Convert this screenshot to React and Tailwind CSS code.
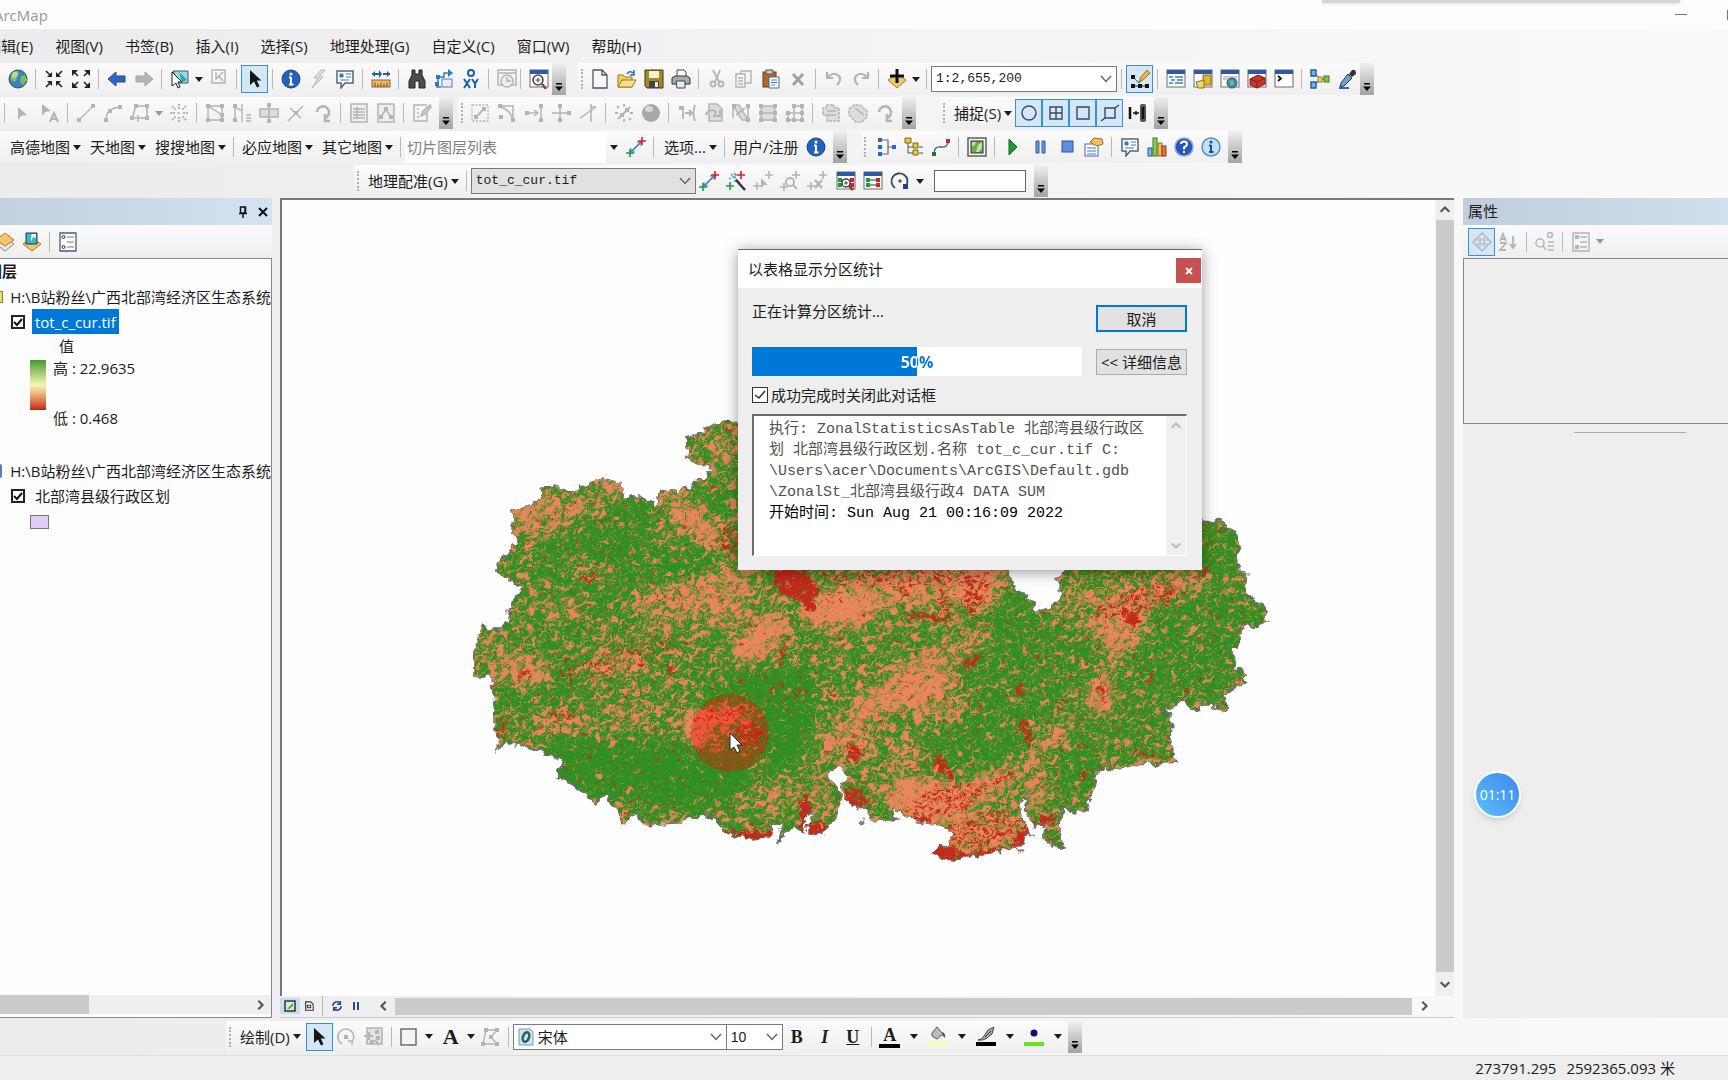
import { useState } from "react";

const G = "#b4b4b4";

const win = (
  <>
    <rect x="1" y="1" width="18" height="17" fill="#fff" stroke="#6b6b6b" />
    <rect x="1" y="1" width="18" height="4" fill="#2d5aa0" />
  </>
);

const cross = (x, y, c) => (
  <path d={`M${x - 4} ${y}H${x + 4}M${x} ${y - 4}V${y + 4}`} stroke={c} strokeWidth="1.6" />
);

const nodes = (pts, c = G) =>
  pts.map(([x, y]) => (
    <rect key={`${x}-${y}`} x={x - 2} y={y - 2} width="4" height="4" fill={c} stroke="none" />
  ));

const pointer = (c) => <path d="M5 1V16L9 12.500L12 18.500L14.500 17.300L11.800 11.500H16.500Z" fill={c} />;

const ICONS = {
  globe: (
    <>
      <circle cx="10" cy="10" r="9" fill="#3c7fc4" stroke="#27507f" />
      <path d="M7 2C3 4 2 8 3 11L7 13L9 10L7 7L11 5L10 2ZM13 7L17 6L19 11L15 16L12 13Z" fill="#7fc04a" />
      <circle cx="7" cy="6" r="3" fill="#fff" opacity=".45" />
    </>
  ),
  zoomIn: (
    <g stroke="#222" strokeWidth="1.600" fill="#222">
      <path d="M2 2L6 6M18 2L14 6M2 18L6 14M18 18L14 14" />
      <path d="M8 3V8H3ZM12 3V8H17ZM8 17V12H3ZM12 17V12H17Z" stroke="none" />
    </g>
  ),
  zoomOut: (
    <g stroke="#222" strokeWidth="1.600" fill="#222">
      <path d="M3 3L7 7M17 3L13 7M3 17L7 13M17 17L13 13" />
      <path d="M1 1H7L1 7ZM19 1H13L19 7ZM1 19H7L1 13ZM19 19H13L19 13Z" stroke="none" />
    </g>
  ),
  back: <path d="M1 10L9 3V7H18V13H9V17Z" fill="#2f66c5" stroke="#1f4a96" />,
  forward: <path d="M19 10L11 3V7H2V13H11V17Z" fill={G} stroke="#a5a5a5" />,
  selectFeatures: (
    <>
      <path d="M3 2H18V14H8Z" fill="#8fdde0" stroke="#555" />
      <path d="M9 3L17 11L12 13Z" fill="#26a7a7" />
      <path d="M2 3V17L6 14L8 19L10 18L8 13H12Z" fill="#fff" stroke="#222" />
    </>
  ),
  clearSel: <path d="M3 1H16V14H3ZM7 3V10L10 7L14 12M10 7L14 3" fill="none" stroke={G} strokeWidth="1.400" />,
  pointer: pointer("#161616"),
  info: (
    <>
      <circle cx="10" cy="10" r="9" fill="#2560bd" stroke="#17458e" />
      <path d="M10 8V16M8 8.500H10M8 15.500H12.500" stroke="#fff" strokeWidth="2" />
      <circle cx="10" cy="5" r="1.500" fill="#fff" />
    </>
  ),
  bolt: <path d="M13 1L6 9H10L4 19L15 8H11L17 1Z" fill="#ddd" stroke={G} />,
  popup: (
    <>
      <path d="M2 2H18V14H10L6 19V14H2Z" fill="#fff" stroke="#5a6470" strokeWidth="1.500" />
      <path d="M5 5H8V8H5ZM11 5H16M11 8H16M5 11H14" fill="#2c7cc0" stroke="#2c7cc0" />
    </>
  ),
  measure: (
    <>
      <path d="M1 5H8M12 5H19" stroke="#1c5fa6" strokeWidth="2" />
      <path d="M8 1V9L11 5ZM1 5L4 2V8ZM19 5L16 2V8Z" fill="#1c5fa6" />
      <rect x="1" y="11" width="18" height="7" fill="#e9b765" stroke="#8a6a2c" />
      <path d="M4 14V18M7 15V18M10 14V18M13 15V18M16 14V18" stroke="#6a4d18" />
    </>
  ),
  binoculars: (
    <path d="M5 1H8V5H12V1H15V6L18 12V19H12V12H8V19H2V12L5 6Z" fill="#4b4b4b" stroke="#222" />
  ),
  route: (
    <>
      <path d="M4 16V8H10V4H15M3 15V18H7" fill="none" stroke="#2c7cc0" strokeWidth="1.500" />
      <path d="M2 6H6V10H2ZM1 13H5V17H1Z" fill="#2c7cc0" />
      <path d="M14 0L19 4L14 8Z" fill="#2c7cc0" />
      <rect x="8" y="10" width="10" height="8" fill="#e6eef6" stroke="#5a7fa5" />
    </>
  ),
  xy: (
    <>
      <circle cx="10" cy="4" r="3" fill="#fff" stroke="#1c5fa6" strokeWidth="2" />
      <path d="M3 10L9 19M9 10L3 19M11 10L14 14.500L17 10M14 14V19" stroke="#1c5fa6" strokeWidth="2" fill="none" />
    </>
  ),
  time: (
    <g fill="none" stroke={G} strokeWidth="1.500">
      <path d="M1 1H19V16H1ZM1 4H19" />
      <circle cx="10" cy="12" r="6" fill="#eee" />
      <path d="M10 8V12H14" />
    </g>
  ),
  viewer: (
    <>
      {win}
      <circle cx="9" cy="11" r="5" fill="#fff" stroke="#444" strokeWidth="1.500" />
      <path d="M6.500 11H11.500M9 8.500V13.500" stroke="#444" />
      <path d="M13 15L17 20" stroke="#9b3b2c" strokeWidth="2.500" />
    </>
  ),
  newDoc: <path d="M3 1H12L17 6V19H3ZM12 1V6H17" fill="#f4f8fd" stroke="#555" strokeWidth="1.300" />,
  open: (
    <>
      <path d="M1 18V6H6L8 8H15V18Z" fill="#f2cf5c" stroke="#9c7a1e" />
      <path d="M1 18L5 11H19L15 18Z" fill="#fbe28a" stroke="#9c7a1e" />
      <path d="M10 5Q13 1 16 4M17 1V6H13" stroke="#2b67b5" fill="none" strokeWidth="1.500" />
    </>
  ),
  save: (
    <>
      <path d="M1 1H19V19H3L1 17Z" fill="#a38b2a" stroke="#3d3413" />
      <rect x="5" y="2" width="10" height="7" fill="#f5f1d8" />
      <rect x="5" y="12" width="10" height="7" fill="#444" />
      <rect x="11" y="13" width="3" height="5" fill="#eee" />
    </>
  ),
  print: (
    <>
      <path d="M6 1H13L15 3V8H6Z" fill="#fff" stroke="#444" />
      <path d="M1 9L4 7H16L19 9V15H1Z" fill="#a5abb4" stroke="#333" />
      <path d="M5 12H14V19H6Z" fill="#dcebf9" stroke="#444" />
      <rect x="14" y="10" width="3" height="2" fill="#9ccc3b" />
    </>
  ),
  cut: (
    <g fill="none" stroke={G} strokeWidth="1.800">
      <path d="M6 1L12 13M13 1L8 13" />
      <circle cx="6" cy="15" r="2.500" />
      <circle cx="14" cy="15" r="2.500" />
    </g>
  ),
  copy: <path d="M2 5H11V18H2ZM7 5V2H17V14H11M4 9H9M4 12H9M4 15H9" fill="none" stroke={G} strokeWidth="1.400" />,
  paste: (
    <>
      <rect x="2" y="3" width="13" height="15" fill="#b5652b" stroke="#6f3a14" />
      <rect x="5" y="1" width="7" height="4" fill="#c9c9c9" stroke="#555" />
      <path d="M8 8H18V19H8Z" fill="#fff" stroke="#44689c" />
      <path d="M10 11H16M10 13.500H16M10 16H14" stroke="#3a7ccc" />
    </>
  ),
  del: <path d="M5 5L15 16M15 5L5 16" stroke="#a0a0a0" strokeWidth="2.800" />,
  undo: <path d="M3 3V9H9M4 8Q10 2 15 7Q18 11 13 16" fill="none" stroke={G} strokeWidth="2.200" />,
  redo: <path d="M17 3V9H11M16 8Q10 2 5 7Q2 11 7 16" fill="none" stroke={G} strokeWidth="2.200" />,
  addData: (
    <>
      <path d="M1 11L10 5L19 11L10 19Z" fill="#f3c56c" stroke="#a77b2a" />
      <path d="M10 0V14M3 7H17" stroke="#111" strokeWidth="3" />
    </>
  ),
  editor: (
    <>
      <path d="M3 8L9 14L17 2" fill="none" stroke="#555" />
      <path d="M9 13L11 8L17 1L20 4L13 11Z" fill="#f0b43f" stroke="#9b6d1c" />
      <path d="M3 17H17" stroke="#222" />
      {nodes([[3, 8], [3, 17], [10, 17], [17, 17]], "#111")}
    </>
  ),
  tableWin: (
    <>
      {win}
      <path d="M3 8H7M9 8H17M5 11H9M11 11H17M3 14H7M9 14H17" stroke="#3a7ccc" strokeWidth="1.600" />
    </>
  ),
  catalog: (
    <>
      {win}
      <path d="M10 6H18V16H10Z" fill="#d9b92e" stroke="#87701a" />
      <path d="M3 13L11 11V19H5Z" fill="#f0d764" stroke="#87701a" />
    </>
  ),
  searchWin: (
    <>
      {win}
      <rect x="3" y="7" width="14" height="4" fill="#ccc" />
      <circle cx="12" cy="14" r="5" fill="#3b86c6" stroke="#2a5b8d" />
      <path d="M9 12L13 11L14 15L11 17Z" fill="#7fc04a" />
    </>
  ),
  toolbox: (
    <>
      {win}
      <path d="M3 10L11 6L18 9V15L10 19L3 16Z" fill="#c8372e" stroke="#7f1c17" />
      <path d="M3 10L10 13L18 9M10 13V19" stroke="#7f1c17" fill="none" />
    </>
  ),
  python: (
    <>
      {win}
      <path d="M4 7L7 9.500L4 12" fill="none" stroke="#111" strokeWidth="1.800" />
    </>
  ),
  model: (
    <>
      <path d="M5 4L10 10L5 16M10 10H17" stroke="#555" fill="none" />
      <path d="M1 1H6V7H1ZM1 13H6V19H1Z" fill="#6db3ea" stroke="#1f5fa0" strokeWidth="1.400" />
      <rect x="8" y="8" width="4" height="5" fill="#f3d35c" stroke="#9c7a1e" />
      <rect x="14" y="7" width="5" height="6" fill="#7fc04a" stroke="#3c7a1c" />
    </>
  ),
  dropper: (
    <>
      <path d="M12 5L15 1Q19 0 19 5L15 8Z" fill="#333" />
      <path d="M11 5L15 9L7 17L3 18L4 14Z" fill="#6d9fe0" stroke="#333" />
      <path d="M2 19H12" stroke="#2d5fd8" strokeWidth="2" />
    </>
  ),
  editArrow: <path d="M5 4V17L8 13L14 12Z" fill={G} />,
  editArrowA: (
    <>
      <path d="M2 1V13L5 9L11 8Z" fill={G} />
      <path d="M10 19L14 10L18 19M11 16H17" stroke={G} strokeWidth="2" fill="none" />
    </>
  ),
  line: (
    <g stroke={G} strokeWidth="1.300">
      <path d="M3 17L17 3" />
      {nodes([[3, 17], [17, 3]])}
    </g>
  ),
  arc: (
    <g stroke={G} strokeWidth="1.300" fill="none">
      <path d="M3 17Q3 5 17 4" />
      {nodes([[3, 17], [7, 8], [17, 4]])}
    </g>
  ),
  trace: (
    <g stroke={G} strokeWidth="1.500" fill="none">
      <path d="M2 15L6 3H17V15H2M8 12V19M5 15H12" />
      {nodes([[2, 15], [6, 3], [17, 3], [17, 15]])}
    </g>
  ),
  star: (
    <path
      d="M10 1V6M10 14V19M1 10H6M14 10H19M3 3L7 7M17 3L13 7M3 17L7 13M17 17L13 13M8.500 10H11.500"
      stroke={G}
      strokeWidth="2"
      strokeDasharray="2 1"
    />
  ),
  reshape: (
    <g stroke={G} strokeWidth="1.400" fill="none">
      <path d="M3 3V17H17V12L3 3H17V12" />
      {nodes([[3, 3], [3, 17], [17, 17], [17, 3], [17, 12]])}
    </g>
  ),
  cutPoly: (
    <g stroke={G} strokeWidth="1.400" fill="none">
      <path d="M3 17V4L10 8V17M10 1V19M14 12H19M14 15H19M14 18H19" />
      {nodes([[3, 3], [3, 17]])}
    </g>
  ),
  splitBox: (
    <g stroke={G} strokeWidth="1.600" fill="none">
      <path d="M1 6H19V14H1ZM10 1V19" fill="#ddd" />
      {nodes([[10, 2], [10, 18]])}
    </g>
  ),
  crossLine: (
    <g stroke={G} strokeWidth="1.500" fill="none">
      <path d="M2 18L17 3M4 5L15 15" />
      {nodes([[10, 10]])}
    </g>
  ),
  rotate: <path d="M4 9A6 6 0 1 1 12 15M12 11V18H17" fill="none" stroke={G} strokeWidth="2.600" />,
  attrs: (
    <g stroke={G} strokeWidth="1.500" fill="none">
      <path d="M2 1H18V19H2Z" fill="#eee" />
      <path d="M4 6H16M4 9H16M4 12H16M4 15H16M8 4V16" />
    </g>
  ),
  sketchProps: (
    <g stroke={G} strokeWidth="1.500" fill="none">
      <path d="M2 1H18V19H2Z" fill="#eee" />
      <path d="M5 14L10 6L15 14" />
      {nodes([[5, 14], [10, 6], [15, 14]])}
    </g>
  ),
  createFeat: (
    <g stroke={G} strokeWidth="1.500" fill="none">
      <path d="M15 9V18H2V2H15M5 6H7M5 10H7M5 14H7" />
      <path d="M9 13L11 8L18 2L19 4L13 11Z" fill="#ccc" />
    </g>
  ),
  boxLine: (
    <g stroke={G} strokeWidth="1.300" fill="none">
      <path d="M2 2H18V18H2Z" strokeDasharray="2 1.500" />
      <path d="M6 14L14 6" strokeWidth="1.800" />
      {nodes([[6, 14], [14, 6]])}
    </g>
  ),
  fillet: (
    <g stroke={G} strokeWidth="1.500" fill="none">
      <path d="M2 3H16V18M3 4Q13 6 16 17" />
      {nodes([[3, 3], [16, 17], [4, 14]])}
    </g>
  ),
  extend: (
    <g stroke={G} strokeWidth="1.500" fill="none">
      <path d="M2 10H14M10 7L14 10L10 13M17 1V19" />
      {nodes([[3, 10], [17, 3], [17, 17]])}
    </g>
  ),
  trim: (
    <g stroke={G} strokeWidth="1.500" fill="none">
      <path d="M1 10H10M9 1V19M10 10H19" />
      {nodes([[9, 3], [9, 17], [18, 10]])}
    </g>
  ),
  lineX: <path d="M2 15L18 4M13 1V19M13 4L18 4" fill="none" stroke={G} strokeWidth="1.500" />,
  explode: (
    <g stroke={G} strokeWidth="1.800">
      <path d="M4 16L16 4" />
      <path d="M10 1V4M10 16V19M1 10H4M16 10H19M3 3L5 5M15 15L17 17" />
      {nodes([[8, 12], [13, 7]])}
    </g>
  ),
  sphere: (
    <>
      <circle cx="10" cy="10" r="9" fill="#a8a8a8" />
      <ellipse cx="8" cy="6" rx="4" ry="3" fill="#d8d8d8" />
    </>
  ),
  align: <path d="M2 4H6V16M6 6H2M8 10H14M12 7L15 10L12 13M18 2Q15 10 18 18" fill="none" stroke={G} strokeWidth="1.800" />,
  replace: (
    <g stroke={G} strokeWidth="1.500">
      <path d="M5 1H13L18 6V18H5Z" fill="#ddd" />
      <path d="M2 12A6 6 0 0 1 12 9L10 13H16V7" fill="none" strokeWidth="2" />
    </g>
  ),
  edgeMatch: (
    <g stroke={G} strokeWidth="1.600" fill="#ddd">
      <path d="M2 2L8 2L17 17H11ZM2 2V15M17 3V17M5 12L14 5" />
      {nodes([[3, 3], [17, 3], [17, 17]])}
    </g>
  ),
  rubber: (
    <g stroke={G} strokeWidth="1.300" fill="#ddd">
      <path d="M3 3H17V17H3ZM3 10H17" />
      {nodes([[3, 3], [17, 3], [17, 17], [3, 17], [3, 10], [17, 10]])}
    </g>
  ),
  gridNodes: (
    <g stroke={G} strokeWidth="1.500" fill="none">
      <path d="M9 3H17V17H3V10H17M9 3V17" />
      {nodes([[9, 3], [17, 3], [17, 10], [17, 17], [9, 17], [3, 17], [3, 10]])}
    </g>
  ),
  topo: (
    <g stroke={G} strokeWidth="1.500" fill="#ddd">
      <path d="M5 2H13V5H18V18H6V12H2V5H5Z" strokeDasharray="3 1" />
      <path d="M6 8H15M6 12H15" />
    </g>
  ),
  topo2: (
    <g stroke={G} strokeWidth="1.500" fill="#ddd">
      <path d="M1 6L6 2H12L19 8V14L14 19H8L1 12Z" strokeDasharray="3 1" />
      <path d="M7 5L16 12" />
    </g>
  ),
  snapPoint: <circle cx="10" cy="10" r="7" fill="none" stroke="#3a4a5e" strokeWidth="1.400" />,
  snapEnd: <path d="M4 4H16V16H4ZM10 4V16M4 10H16" fill="none" stroke="#3a4a5e" strokeWidth="1.400" />,
  snapVertex: <path d="M4 4H16V16H4Z" fill="none" stroke="#3a4a5e" strokeWidth="1.400" />,
  snapEdge: <path d="M5 5H15V15H5ZM1 18L5 15M15 5L19 2" fill="none" stroke="#3a4a5e" strokeWidth="1.400" />,
  snapGap: (
    <>
      <path d="M3 4V16" stroke="#111" strokeWidth="2.500" />
      <path d="M6 10H12M9 8V12" stroke="#111" strokeWidth="1.500" />
      <rect x="13" y="1" width="6" height="18" rx="2" fill="#555" />
      <path d="M16 4V16" stroke="#111" strokeWidth="2.500" />
    </>
  ),
  linkAdd: (
    <>
      <path d="M5 15L15 5" stroke="#2c7cc0" strokeWidth="1.600" />
      <path d="M5 11V15H9M15 9V5H11" stroke="#2c7cc0" fill="none" />
      {cross(16, 4, "#e01b1b")}
      {cross(4, 16, "#1c9a3e")}
    </>
  ),
  autoReg: (
    <>
      <path d="M5 3L14 12M3 8L12 3M9 2V12" stroke="#62aede" strokeWidth="2" strokeDasharray="2 1.500" />
      <path d="M10 9L19 19" stroke="#333" strokeWidth="2.500" />
      {cross(15, 4, "#e01b1b")}
      {cross(4, 15, "#1c9a3e")}
    </>
  ),
  selLink: (
    <>
      <path d="M8 7V17L11 14H15Z" fill={G} />
      {cross(16, 4, G)}
      {cross(4, 15, G)}
    </>
  ),
  zoomLink: (
    <>
      <circle cx="10" cy="11" r="4" fill="none" stroke={G} strokeWidth="1.800" />
      <path d="M13 14L17 18" stroke={G} strokeWidth="2" />
      {cross(16, 4, G)}
      {cross(4, 16, G)}
    </>
  ),
  delLink: (
    <>
      <path d="M8 9L15 17M15 9L8 17" stroke={G} strokeWidth="2.500" />
      {cross(16, 4, G)}
      {cross(4, 15, G)}
    </>
  ),
  linkView: (
    <>
      {win}
      <path d="M4 9H16M4 14H16" stroke="#333" />
      {nodes([[4, 9], [4, 14]], "#1c9a3e")}
      {nodes([[16, 9], [16, 14]], "#d22222")}
      <circle cx="10" cy="12" r="4" fill="#fff" stroke="#444" strokeWidth="1.500" />
      <path d="M10 10V14M8 12H12" stroke="#444" />
      <path d="M13 15L17 19" stroke="#9b3b2c" strokeWidth="2.500" />
    </>
  ),
  linkTable: (
    <>
      {win}
      <path d="M4 9H16M4 14H16" stroke="#333" />
      {nodes([[5, 9], [5, 14]], "#1c9a3e")}
      {nodes([[15, 9], [15, 14]], "#d22222")}
    </>
  ),
  rotateBlue: (
    <>
      <path d="M5 17A8 8 0 1 1 16 15" fill="none" stroke="#33486b" strokeWidth="1.800" />
      <rect x="13" y="13" width="5" height="5" fill="#1d3f9c" />
      <path d="M8 10H12M10 8V12" stroke="#333" />
    </>
  ),
  netBlue: (
    <>
      <path d="M4 3H11V17H4M11 10H17" fill="none" stroke="#666" strokeWidth="1.200" />
      {nodes([[3, 3], [3, 10], [3, 17], [17, 10]], "#2d64c8")}
    </>
  ),
  treeYellow: (
    <>
      <path d="M4 5V16H10M4 10H10M15 10H19M15 16H19" fill="none" stroke="#555" />
      <path d="M1 1H7V6H1ZM9 6H14V11H9ZM9 13H14V18H9Z" fill="#e6c93e" stroke="#7d6a18" />
    </>
  ),
  curve: (
    <>
      <path d="M3 17Q3 9 10 10T17 4" fill="none" stroke="#555" strokeWidth="1.300" />
      {nodes([[3, 17]], "#1c7a2e")}
      {nodes([[17, 4]], "#d22222")}
    </>
  ),
  mapView: (
    <>
      <rect x="1" y="1" width="18" height="18" fill="#f4f4f4" stroke="#555" strokeWidth="1.400" />
      <rect x="4" y="4" width="12" height="12" fill="#6dab4d" stroke="#333" />
      <path d="M5 5H9L7 9H5ZM11 8L15 5V11L12 15H9Z" fill="#c4e4a4" />
      <path d="M15 12V15H12Z" fill="#4f9fd0" />
    </>
  ),
  play: <path d="M6 2L14 10L6 18Z" fill="#1f9a34" stroke="#14691f" />,
  pause: <path d="M6 4H9V16H6ZM12 4H15V16H12Z" fill="#6a9ae8" stroke="#2c55a8" />,
  stop: <rect x="5" y="4" width="11" height="11" fill="#5f8fe0" stroke="#2c55a8" />,
  handProps: (
    <>
      <rect x="1" y="7" width="13" height="12" fill="#fff" stroke="#44689c" />
      <path d="M3 11H12M3 14H12M3 17H12" stroke="#3a7ccc" />
      <path d="M6 5L10 1L18 2L19 7L13 9L9 7Z" fill="#eebf62" stroke="#94701f" />
    </>
  ),
  bars: (
    <>
      <rect x="1" y="11" width="4" height="8" fill="#7ab6ea" stroke="#2c5b92" />
      <rect x="6" y="1" width="4" height="18" fill="#8ccc5a" stroke="#3c7a1c" />
      <rect x="11" y="6" width="4" height="13" fill="#efc14a" stroke="#94701f" />
      <rect x="15" y="9" width="4" height="10" fill="#e2704a" stroke="#93381c" />
    </>
  ),
  help: (
    <>
      <circle cx="10" cy="10" r="9" fill="#2857b8" stroke="#8aa6dd" strokeWidth="1.500" />
      <path d="M7 7Q7 4.500 10 4.500T13 7Q13 9 10 10.500V12.500M10 14V16" stroke="#fff" strokeWidth="2" fill="none" />
    </>
  ),
  infoLight: (
    <>
      <circle cx="10" cy="10" r="9" fill="#bfe2f7" stroke="#5a8fbe" strokeWidth="1.500" />
      <path d="M10 8V15M8 8.500H10M8 15H12.500" stroke="#1c4f92" strokeWidth="2" />
      <circle cx="10" cy="5" r="1.500" fill="#1c4f92" />
    </>
  ),
  layers: (
    <>
      <path d="M1 12L10 6L19 12L10 19Z" fill="#e8e8e8" stroke="#888" />
      <path d="M1 8L10 1L19 8L10 14Z" fill="#f3c56c" stroke="#a77b2a" />
    </>
  ),
  visible: (
    <>
      <path d="M1 12L10 6L19 12L10 19Z" fill="#f3c56c" stroke="#a77b2a" />
      <path d="M4 1H15V12H4Z" fill="#32b8cf" stroke="#333" />
      <path d="M10 2H14V6L11 5L9 10V4Z" fill="#e8f8fb" />
    </>
  ),
  listOpt: (
    <>
      <path d="M2 1H18V19H2Z" fill="#fff" stroke="#44607f" strokeWidth="1.300" />
      <path d="M9 5H16M9 10H16M9 15H16" stroke="#777" />
      <circle cx="5.500" cy="5" r="1.500" fill="none" stroke="#333" />
      <circle cx="5.500" cy="15" r="1.500" fill="none" stroke="#333" />
    </>
  ),
  category: (
    <>
      <path d="M10 1L19 10L10 19L1 10Z" fill="none" stroke={G} strokeWidth="1.400" />
      <path d="M4 8H16M4 12H16M8 5V15M12 5V15" stroke={G} />
    </>
  ),
  sortAz: (
    <path d="M1 9L4 2L7 9M2 7H6M1 11H7L1 18H7M14 4V16M11 12L14 16L17 12" fill="none" stroke={G} strokeWidth="1.800" />
  ),
  searchProps: (
    <g fill="none" stroke={G} strokeWidth="1.500">
      <circle cx="5" cy="11" r="4" />
      <path d="M8 14L11 18M13 10H19M13 14H19M13 18H19" />
      <circle cx="15" cy="3" r="2.500" />
    </g>
  ),
  listGray: (
    <g fill="none" stroke={G} strokeWidth="1.400">
      <path d="M2 1H18V19H2ZM9 5H16M9 10H16M9 15H16" />
      {nodes([[6, 5], [6, 15]])}
    </g>
  ),
  rotateEl: (
    <g fill="none" stroke={G} strokeWidth="1.500">
      <path d="M6 17A8 8 0 1 1 16 15M16 18V14H12" />
      {nodes([[10, 10]])}
    </g>
  ),
  zoomEl: (
    <g fill="none" stroke={G} strokeWidth="1.600">
      <path d="M4 1H19V17H4Z" fill="#e2e2e2" />
      <path d="M1 9H10M6 5V13M12 13L16 18" strokeWidth="2" />
      {nodes([[14, 5], [15, 11], [9, 15]])}
    </g>
  ),
  rectEl: <rect x="2" y="2" width="15" height="16" fill="#f4f4f4" stroke="#666" strokeWidth="1.400" />,
  editVert: (
    <g stroke={G} strokeWidth="1.400" fill="none">
      <path d="M3 17L6 3H17L11 10L17 17H3" />
      {nodes([[3, 17], [6, 3], [17, 3], [11, 10], [17, 17]])}
    </g>
  ),
  fill: (
    <>
      <path d="M4 6L9 0L15 7L9 12L4 9Z" fill="#bbb" stroke="#555" />
      <path d="M14 5Q18 6 17 11L14 8Z" fill="#555" />
      <rect x="0" y="15" width="20" height="4" fill="#f7fbae" />
    </>
  ),
  pen: (
    <>
      <path d="M2 13Q6 13 8 9L12 3L18 0L16 7L11 11Q7 14 2 13" fill="#aaa" stroke="#444" />
      <path d="M9 10L15 4" stroke="#333" />
      <rect x="0" y="15" width="20" height="4" fill="#000" />
    </>
  ),
  dot: (
    <>
      <circle cx="10" cy="6" r="3.500" fill="#10106e" />
      <rect x="0" y="15" width="20" height="4" fill="#66e320" />
    </>
  ),
};

const ACTIVE = new Set(["pointer", "editor", "snapPoint", "snapEnd", "snapVertex", "snapEdge", "category"]);

function Icon({ name }) {
  return (
    <svg viewBox="0 0 20 20" className="size-5 shrink-0" aria-hidden="true">
      {ICONS[name]}
    </svg>
  );
}

function Caret({ className = "w-3" }) {
  return (
    <span className={`flex shrink-0 justify-center ${className}`}>
      <svg viewBox="0 0 8 5" className="h-[5px] w-2" aria-hidden="true">
        <path d="M0 0H8L4 5Z" fill="currentColor" />
      </svg>
    </span>
  );
}

const Sep = () => (
  <span className="flex w-[9px] shrink-0 justify-center">
    <span className="h-5 w-px bg-[#b9b9b9]" />
  </span>
);

const Grip = () => (
  <span className="flex w-2 shrink-0 justify-center">
    <span className="h-5 border-l-2 border-dotted border-[#b0b0b0]" />
  </span>
);

function Overflow() {
  return (
    <button
      aria-label="Toolbar options"
      className="flex w-[14px] shrink-0 items-end justify-center self-stretch bg-linear-to-b from-[#f0f0f0] to-[#a3a3a3] pb-1"
    >
      <svg viewBox="0 0 8 8" className="size-2" aria-hidden="true">
        <path d="M1 0H7V1.500H1ZM0 3.500H8L4 8Z" />
      </svg>
    </button>
  );
}

// "|" is a separator, "v" a drop-down arrow and "-" a disabled one, all else is an icon name
function Tools({ items }) {
  return items.split(" ").map((name, i) => {
    if (name === "|") return <Sep key={i} />;
    if (name === "v" || name === "-")
      return (
        <button key={i} aria-label="More" className={`flex items-center ${name === "-" ? "text-[#999]" : ""}`}>
          <Caret />
        </button>
      );
    return (
      <button
        key={i}
        aria-label={name}
        className={`flex h-7 w-[27px] shrink-0 items-center justify-center border ${
          ACTIVE.has(name) ? "border-[#3a8fd8] bg-[#d3e7f7]" : "border-transparent hover:bg-[#e3effa]"
        }`}
      >
        <Icon name={name} />
      </button>
    );
  });
}

function Toolbar({ className = "", children }) {
  return (
    <div className={`flex h-8 shrink-0 items-center bg-linear-to-b from-[#fbfbfb] to-[#efefef] ${className}`}>
      {children}
    </div>
  );
}

function TextMenu({ children }) {
  return (
    <button className="flex shrink-0 items-center whitespace-nowrap">
      {children}
      <Caret className="w-[14px]" />
    </button>
  );
}

function Combo({ label, value, className, children }) {
  return (
    <div className={`relative flex h-[26px] shrink-0 items-center border border-[#7a7a7a] ${className}`}>
      {children}
      <select aria-label={label} className="h-full w-full appearance-none bg-transparent px-1 outline-none">
        <option>{value}</option>
      </select>
      <svg
        viewBox="0 0 12 8"
        className="pointer-events-none absolute right-1 h-2 w-3"
        fill="none"
        stroke="#666"
        strokeWidth="1.500"
        aria-hidden="true"
      >
        <path d="M1 1L6 6.500L11 1" />
      </svg>
    </div>
  );
}

const CHEVRONS = {
  up: "M2 9L7 4L12 9",
  down: "M2 5L7 10L12 5",
  left: "M9 2L4 7L9 12",
  right: "M5 2L10 7L5 12",
};

function ScrollArrow({ dir, className = "", color = "#555" }) {
  return (
    <button aria-label={`Scroll ${dir}`} className={`flex shrink-0 items-center justify-center ${className}`}>
      <svg viewBox="0 0 14 14" className="size-3" fill="none" stroke={color} strokeWidth="2.500" aria-hidden="true">
        <path d={CHEVRONS[dir]} />
      </svg>
    </button>
  );
}

function TreeCheck({ label, defaultSelected }) {
  const [checked, setChecked] = useState(true);
  return (
    <label className="flex h-[25px] items-center">
      <span className="relative ml-[11px] size-[14px] shrink-0">
        <input
          type="checkbox"
          checked={checked}
          onChange={() => setChecked(!checked)}
          className="block size-[14px] appearance-none border-2 border-[#222] bg-white"
        />
        {checked && (
          <svg viewBox="0 0 14 14" className="pointer-events-none absolute inset-0" fill="none" stroke="#111" strokeWidth="2">
            <path d="M3 7L6 10L11 4" />
          </svg>
        )}
      </span>
      <span
        className={`ml-[7px] flex h-[25px] items-center px-[3px] ${
          defaultSelected ? "bg-[#0078d7] text-white" : ""
        }`}
      >
        {label}
      </span>
    </label>
  );
}

const LAND =
  "M514 512L527 508L540 500L543 487L560 486L567 492L580 490L593 482L607 478L620 482L625 497L643 497L657 506L662 490L673 492L690 488L697 480L708 478L713 468L702 463L690 460L687 438L703 432L715 425L727 420L737 422L770 425L1000 520L1007 571L1013 582L1017 590L1027 595L1037 613L1050 608L1063 595L1059 578L1067 571L1150 540L1203 520L1215 523L1222 520L1227 528L1238 533L1242 550L1237 558L1240 571L1248 572L1246 592L1257 600L1265 608L1267 623L1250 628L1243 626L1240 647L1231 647L1236 655L1235 668L1243 672L1248 683L1237 685L1225 697L1229 707L1220 710L1205 703L1196 713L1183 701L1173 708L1165 708L1172 717L1171 745L1178 762L1160 765L1147 763L1117 769L1103 768L1097 773L1093 793L1089 810L1077 814L1065 810L1060 820L1064 848L1057 848L1044 837L1047 825L1037 828L1030 817L1025 798L1020 803L1022 817L1030 833L1023 845L1000 852L967 856L953 861L932 852L950 845L953 833L943 825L920 822L907 818L895 807L897 818L875 822L868 810L867 805L858 810L845 798L842 790L850 773L838 766L827 775L837 787L843 805L833 823L822 834L808 835L808 827L816 813L808 813L803 832L797 827L790 830L778 843L780 837L785 822L773 825L770 837L757 839L728 835L713 815L693 818L677 823L645 825L637 813L622 824L619 813L608 795L595 802L575 785L557 778L564 760L550 755L530 748L507 742L498 750L499 737L495 707L493 677L475 677L475 655L483 624L490 630L505 630L513 600L524 588L507 580L495 567L510 553L520 537L513 532Z";

// cx, cy, rx, ry, angle, lightness: the lighter, the denser the speckle
const COVER = [
  [600, 570, 60, 45, 0, 0.24],
  [640, 575, 60, 22, 0, 0.2],
  [700, 565, 22, 20, 0, 0.16],
  [560, 640, 30, 20, 0, 0.3],
  [620, 520, 50, 25, 0, 0.26],
  [700, 500, 30, 18, 0, 0.24],
  [620, 770, 90, 30, 5, 0.12],
  [690, 775, 60, 30, 0, 0.08],
  [560, 725, 40, 16, 20, 0.24],
  [760, 690, 60, 16, -12, 0.12],
  [785, 730, 26, 45, 20, 0.12],
  [520, 695, 22, 14, 0, 0.24],
  [560, 683, 22, 14, 0, 0.22],
  [1000, 640, 30, 70, 25, 0.2],
  [980, 720, 60, 50, 0, 0.24],
  [1060, 670, 80, 40, 0, 0.28],
  [1190, 650, 60, 50, 0, 0.26],
  [1130, 720, 60, 35, 0, 0.3],
  [1215, 550, 25, 30, 0, 0.24],
  [1075, 780, 30, 30, 0, 0.24],
  [1230, 610, 30, 25, 0, 0.26],
  [850, 600, 50, 12, -20, 0.36],
  [535, 510, 28, 8, -20, 0.7],
  [565, 518, 50, 7, -20, 0.62],
  [612, 482, 16, 8, 0, 0.7],
  [668, 497, 12, 9, 20, 0.64],
  [700, 525, 35, 14, 45, 0.68],
  [715, 590, 40, 22, -25, 0.6],
  [655, 595, 35, 9, -20, 0.6],
  [670, 615, 25, 12, -30, 0.56],
  [590, 572, 30, 8, 10, 0.54],
  [570, 605, 20, 10, 0, 0.54],
  [762, 638, 30, 14, -40, 0.8],
  [735, 600, 20, 30, 20, 0.56],
  [840, 608, 40, 16, -5, 0.84],
  [920, 585, 75, 24, 0, 0.6],
  [980, 585, 24, 25, 20, 0.74],
  [526, 672, 24, 11, 10, 0.74],
  [490, 655, 20, 8, 20, 0.58],
  [620, 665, 34, 10, -15, 0.58],
  [565, 722, 38, 8, 8, 0.68],
  [635, 716, 20, 8, 0, 0.62],
  [715, 717, 34, 8, -10, 0.95],
  [700, 735, 10, 18, 0, 0.74],
  [850, 745, 28, 14, -10, 0.62],
  [880, 700, 75, 12, -42, 0.64],
  [920, 690, 40, 12, -20, 0.8],
  [960, 650, 45, 8, -30, 0.62],
  [945, 710, 30, 14, -15, 0.56],
  [902, 755, 9, 16, 0, 0.68],
  [930, 800, 42, 18, 10, 0.92],
  [985, 785, 38, 9, -28, 0.8],
  [985, 835, 45, 20, -10, 0.66],
  [1120, 625, 26, 26, 0, 0.66],
  [1150, 595, 60, 10, -18, 0.66],
  [1080, 600, 40, 8, -15, 0.56],
  [1100, 697, 14, 16, 10, 0.74],
  [1112, 665, 20, 7, -60, 0.6],
  [1045, 745, 35, 6, -45, 0.66],
  [1040, 790, 12, 22, 15, 0.6],
  [775, 795, 22, 6, -10, 0.62],
  [730, 440, 30, 12, -50, 0.54],
  [815, 800, 24, 18, 0, 0.46],
];

const URBAN = [
  [796, 584, 24, 15, 25, 1],
  [810, 602, 6, 10, 0, 1],
  [1133, 617, 8, 9, 0, 1],
  [1166, 600, 6, 6, 0, 0.9],
  [945, 768, 5, 16, -30, 0.9],
  [945, 770, 12, 4, 20, 0.8],
  [1027, 732, 4, 14, -20, 0.9],
  [1021, 690, 3, 9, 5, 0.9],
  [930, 617, 30, 3, 5, 0.8],
  [945, 605, 3, 18, -10, 0.8],
  [972, 663, 11, 4, -35, 0.9],
  [945, 855, 16, 8, -10, 1],
  [1025, 838, 7, 20, 30, 0.9],
  [985, 853, 35, 3, -8, 0.9],
  [752, 835, 30, 4, 0, 1],
  [806, 815, 5, 24, 0, 0.9],
  [818, 829, 14, 7, -20, 0.9],
  [856, 752, 9, 8, -20, 0.9],
  [856, 798, 14, 9, 20, 0.85],
  [922, 820, 12, 4, 0, 0.9],
  [960, 809, 6, 4, 0, 0.8],
  [1048, 820, 8, 5, 0, 0.9],
  [527, 674, 8, 4, 0, 0.7],
  [620, 668, 18, 4, -30, 0.64],
  [671, 670, 5, 7, 0, 0.7],
  [565, 715, 18, 6, 0, 0.46],
  [590, 579, 10, 4, 0, 0.7],
  [775, 690, 12, 2, -50, 0.8],
  [798, 693, 12, 2, -25, 0.7],
  [784, 650, 3, 16, 15, 0.7],
  [725, 715, 28, 6, -10, 0.44],
  [750, 732, 12, 12, 0, 0.56],
  [730, 540, 14, 14, 0, 0.5],
  [900, 580, 5, 20, -20, 0.66],
  [900, 577, 80, 12, 0, 0.38],
  [975, 595, 12, 22, 20, 0.5],
  [945, 800, 40, 14, -15, 0.42],
  [990, 785, 34, 4, -28, 0.56],
  [985, 830, 42, 16, -10, 0.44],
  [1140, 600, 50, 12, -18, 0.44],
  [1205, 571, 5, 7, 0, 0.7],
  [1085, 777, 7, 2, 0, 0.8],
  [1150, 755, 18, 2, 15, 0.8],
  [1153, 677, 3, 7, 0, 0.7],
  [1103, 692, 5, 12, 0, 0.6],
  [503, 730, 5, 12, 20, 0.6],
  [620, 660, 70, 14, -15, 0.3],
];

const blobs = (list) =>
  list.map(([cx, cy, rx, ry, a, v], i) => (
    <ellipse
      key={i}
      cx={cx}
      cy={cy}
      rx={rx}
      ry={ry}
      transform={`rotate(${a} ${cx} ${cy})`}
      fill={`rgb(${Math.round(v * 255)} ${Math.round(v * 255)} ${Math.round(v * 255)})`}
    />
  ));

function Speckle({ id, color, freq, seed, blur, weight }) {
  return (
    <filter id={id} filterUnits="userSpaceOnUse" x="350" y="150" width="1040" height="1000" colorInterpolationFilters="sRGB">
      <feGaussianBlur in="SourceGraphic" stdDeviation={blur} />
      <feColorMatrix values="0 0 0 0 0  0 0 0 0 0  0 0 0 0 0  1 0 0 0 0" result="density" />
      <feTurbulence type="fractalNoise" baseFrequency={freq} numOctaves="4" seed={seed} />
      <feColorMatrix values="0 0 0 0 0  0 0 0 0 0  0 0 0 0 0  1 0 0 0 0" result="noise" />
      <feComposite in="density" in2="noise" operator="arithmetic" k1="0" k2={weight} k3={1 - weight} k4="0" />
      <feComponentTransfer result="cut">
        <feFuncA type="linear" slope="24" intercept="-12" />
      </feComponentTransfer>
      <feFlood floodColor={color} />
      <feComposite in2="cut" operator="in" />
    </filter>
  );
}

// The noise is drawn on a tilted plane, so that it streaks to the north-east
function Layer({ filter, base, list, tilt }) {
  return (
    <g transform={`rotate(${-tilt} 870 640)`}>
      <g filter={`url(#${filter})`}>
        <g transform={`rotate(${tilt} 870 640)`}>
          <rect x="0" y="0" width="1800" height="1400" fill={base} />
          {blobs(list)}
        </g>
      </g>
    </g>
  );
}

function RasterMap() {
  return (
    <svg viewBox="470 410 810 460" className="absolute top-[210px] left-[187px] h-[460px] w-[810px]" role="img" aria-label="tot_c_cur.tif">
      <defs>
        <clipPath id="land">
          <path d={LAND} />
        </clipPath>
        <filter id="coast" filterUnits="userSpaceOnUse" x="470" y="410" width="810" height="460">
          <feTurbulence type="fractalNoise" baseFrequency=".13" numOctaves="2" seed="8" />
          <feDisplacementMap in="SourceGraphic" scale="11" xChannelSelector="R" yChannelSelector="G" />
        </filter>
        <Speckle id="orange" color="#e6875b" freq=".11 .22" seed="4" blur="6" weight={0.34} />
        <Speckle id="fine" color="#c98a4c" freq=".4 .5" seed="11" blur="8" weight={0.34} />
        <Speckle id="red" color="#c3291b" freq=".25 .36" seed="21" blur="2" weight={0.32} />
      </defs>
      <g filter="url(#coast)">
        <path d={LAND} fill="#2f9020" stroke="#6d6d6d" strokeWidth="1.500" />
        <g clipPath="url(#land)">
          <Layer filter="fine" base="rgb(82 82 82)" list={COVER} tilt={25} />
          <Layer filter="orange" base="rgb(100 100 100)" list={COVER} tilt={28} />
          <Layer filter="red" base="rgb(22 22 22)" list={URBAN} tilt={20} />
        </g>
        <path d="M859 824L866 820M1016 847L1022 852M1030 835L1034 836" stroke="#777" strokeWidth="2" />
      </g>
      <circle cx="731" cy="733" r="39" fill="#f00" opacity=".35" />
      <path d="M731 733V750L735 747L738 753L741 751L738 745H743Z" fill="#fff" stroke="#222" />
    </svg>
  );
}

function Progress({ value }) {
  return (
    <div
      role="progressbar"
      aria-valuenow={value}
      className="flex h-[29px] w-[330px] items-center justify-center"
      style={{ background: `linear-gradient(90deg, #0078d7 ${value}%, #fff ${value}%)` }}
    >
      <span
        className="w-full bg-clip-text text-center text-base font-bold text-transparent"
        style={{ backgroundImage: `linear-gradient(90deg, #fff ${value}%, #0078d7 ${value}%)` }}
      >
        {value}%
      </span>
    </div>
  );
}

function StatsDialog() {
  return (
    <div
      role="dialog"
      aria-labelledby="dialog-title"
      className="absolute top-[249px] left-[738px] w-[464px] border-t border-[#666] bg-[#eee] pb-[14px] shadow-[0_2px_14px_rgba(0,0,0,0.4)]"
    >
      <div className="flex h-[38px] items-center justify-between bg-white pl-[10px]">
        <h2 id="dialog-title">以表格显示分区统计</h2>
        <button aria-label="Close" className="mt-[3px] mr-px flex size-[25px] items-center justify-center bg-[#c75050]">
          <svg viewBox="0 0 8 8" className="size-2" stroke="#fff" strokeWidth="1.800" aria-hidden="true">
            <path d="M1 1L7 7M7 1L1 7" />
          </svg>
        </button>
      </div>
      <div className="pr-[15px] pl-[14px]">
        <div className="flex h-[59px] justify-between pt-[13px]">
          <p className="leading-[20px]">正在计算分区统计...</p>
          <button className="mt-1 h-[27px] w-[91px] border-2 border-[#0078d7] bg-[#e1e1e1]">取消</button>
        </div>
        <div className="flex items-center justify-between">
          <Progress value={50} />
          <button className="h-[26px] w-[91px] border border-[#adadad] bg-[#e1e1e1] whitespace-nowrap">
            &lt;&lt; 详细信息
          </button>
        </div>
        <label className="mt-[8px] flex h-[22px] items-center gap-[3px]">
          <span className="relative size-4">
            <input type="checkbox" defaultChecked className="peer block size-4 appearance-none border border-[#333] bg-white" />
            <svg
              viewBox="0 0 16 16"
              className="pointer-events-none absolute inset-0 hidden peer-checked:block"
              fill="none"
              stroke="#333"
              strokeWidth="1.500"
            >
              <path d="M3 8L7 11L13 4" />
            </svg>
          </span>
          成功完成时关闭此对话框
        </label>
        <div className="mt-2 flex h-[142px] border border-t-2 border-l-2 border-[#fff] border-t-[#6b6b6b] border-l-[#6b6b6b] bg-white">
          <div className="flex-1 pt-[3px] pl-[15px] font-['Liberation_Mono','Noto_Sans_CJK_SC',monospace] leading-[21px] whitespace-nowrap text-[#505050]">
            <p>执行: ZonalStatisticsAsTable 北部湾县级行政区</p>
            <p>划 北部湾县级行政区划.名称 tot_c_cur.tif C:</p>
            <p>\Users\acer\Documents\ArcGIS\Default.gdb</p>
            <p>\ZonalSt_北部湾县级行政4 DATA SUM</p>
            <p className="text-black">开始时间: Sun Aug 21 00:16:09 2022</p>
          </div>
          <div className="flex w-5 flex-col justify-between bg-[#f0f0f0] py-1">
            <ScrollArrow dir="up" color="#bbb" />
            <ScrollArrow dir="down" color="#bbb" />
          </div>
        </div>
      </div>
    </div>
  );
}

const MENUS = ["编辑(E)", "视图(V)", "书签(B)", "插入(I)", "选择(S)", "地理处理(G)", "自定义(C)", "窗口(W)", "帮助(H)"];

function TopBars() {
  return (
    <header className="shrink-0">
      <div className="relative flex h-[29px] items-center bg-[#fdfdfd]">
        <h1 className="-ml-[6px] text-[#999]">ArcMap</h1>
        <div className="absolute top-0 right-12 h-[3px] w-[358px] bg-[#d4d4d4] shadow-[0_0_4px_#d4d4d4]" />
        <button aria-label="Minimize" className="mr-[40px] ml-auto h-4 w-3">
          <span className="block h-px bg-[#777]" />
        </button>
        <button aria-label="Maximize" className="h-[10px] w-px bg-[#777]" />
      </div>
      <nav className="flex h-[34px] items-center gap-[22px] overflow-hidden pb-px">
        {MENUS.map((m, i) => (
          <button key={m} className={`shrink-0 ${i === 0 ? "-ml-[14px]" : ""}`}>
            {m}
          </button>
        ))}
      </nav>
      <div className="flex flex-col gap-[2px] pb-px">
        <div className="flex">
          <Toolbar className="pl-1">
            <Tools items="globe | zoomIn zoomOut | back forward | selectFeatures v clearSel | pointer | info bolt popup | measure | binoculars route xy | time" />
            <span className="-ml-1" />
            <Tools items="| viewer" />
            <Overflow />
          </Toolbar>
          <Toolbar className="ml-3">
            <Grip />
            <Tools items="newDoc open save print | cut copy paste del | undo redo | addData v |" />
            <Combo
              label="Map scale"
              value="1:2,655,200"
              className="w-[186px] bg-white font-['Liberation_Mono',monospace] text-[13px]"
            />
            <Tools items="| editor | tableWin catalog searchWin toolbox python | model dropper" />
            <Overflow />
          </Toolbar>
        </div>
        <div className="flex">
          <Toolbar>
            <Tools items="| editArrow editArrowA | line arc trace - star | reshape cutPoly splitBox crossLine rotate | attrs sketchProps | createFeat" />
            <span className="w-1" />
            <Overflow />
          </Toolbar>
          <Toolbar className="ml-[5px]">
            <Grip />
            <Tools items="boxLine fillet extend trim lineX | explode sphere | align replace edgeMatch rubber gridNodes | topo topo2 rotate" />
            <span className="w-1" />
            <Overflow />
          </Toolbar>
          <Toolbar className="ml-6">
            <Grip />
            <span className="w-[6px]" />
            <TextMenu>捕捉(S)</TextMenu>
            <Tools items="snapPoint snapEnd snapVertex snapEdge snapGap" />
            <span className="w-1" />
            <Overflow />
          </Toolbar>
        </div>
        <div className="flex">
          <Toolbar className="pl-[10px]">
            <div className="flex gap-[6px]">
              <TextMenu>高德地图</TextMenu>
              <TextMenu>天地图</TextMenu>
              <TextMenu>搜搜地图</TextMenu>
            </div>
            <Sep />
            <div className="flex gap-[6px] pl-1">
              <TextMenu>必应地图</TextMenu>
              <TextMenu>其它地图</TextMenu>
            </div>
            <Sep />
            <div className="flex w-[217px] items-center">
              <select aria-label="Tile layers" className="h-8 flex-1 appearance-none bg-white px-[2px] text-[#808080]">
                <option>切片图层列表</option>
              </select>
              <Caret className="w-4" />
            </div>
            <Tools items="linkAdd |" />
            <div className="pl-[6px]">
              <TextMenu>选项...</TextMenu>
            </div>
            <Sep />
            <button className="px-1 whitespace-nowrap">用户/注册</button>
            <Tools items="info" />
            <span className="w-1" />
            <Overflow />
          </Toolbar>
          <Toolbar className="ml-[14px]">
            <Grip />
            <span className="w-1" />
            <Tools items="netBlue treeYellow curve | mapView | play pause stop handProps | popup bars help infoLight" />
            <span className="w-1" />
            <Overflow />
          </Toolbar>
        </div>
        <div className="flex pl-[354px]">
          <Toolbar>
            <Grip />
            <span className="w-[6px]" />
            <TextMenu>地理配准(G)</TextMenu>
            <Sep />
            <Combo
              label="Layer to georeference"
              value="tot_c_cur.tif"
              className="w-[225px] bg-[#e1e1e1] font-['Liberation_Mono',monospace] text-[13px]"
            />
            <Tools items="linkAdd autoReg selLink zoomLink delLink" />
            <span className="w-[2px]" />
            <Tools items="linkView linkTable rotateBlue v" />
            <input aria-label="Rotation" className="mx-2 h-[22px] w-[92px] border border-[#666] bg-white px-1" />
            <Overflow />
          </Toolbar>
        </div>
      </div>
    </header>
  );
}

const PATH = "H:\\B站粉丝\\广西北部湾经济区生态系统";

function Contents() {
  return (
    <aside className="flex w-[272px] shrink-0 flex-col">
      <div className="flex h-[27px] shrink-0 items-center justify-end gap-[10px] bg-linear-to-r from-[#c2d0e0] to-[#d3e3f1] pr-1">
        <button aria-label="Auto hide">
          <svg viewBox="0 0 10 12" className="h-3 w-[10px]" fill="none" stroke="#111" strokeWidth="1.500">
            <path d="M2.500 1H7.500V7H2.500ZM1 7.500H9M5 7V12M7 1V7" />
          </svg>
        </button>
        <button aria-label="Close contents">
          <svg viewBox="0 0 10 10" className="size-[10px]" stroke="#111" strokeWidth="2">
            <path d="M1 1L9 9M9 1L1 9" />
          </svg>
        </button>
      </div>
      <div className="flex h-[33px] shrink-0 items-center bg-linear-to-b from-[#fafafa] to-[#eee]">
        <div className="-ml-[9px] flex items-center">
          <Tools items="layers visible | listOpt" />
        </div>
      </div>
      <div className="flex min-h-0 flex-1 flex-col border-t border-r border-b border-[#888] bg-[#fdfdfd]">
        <ul className="flex-1 overflow-hidden whitespace-nowrap">
          <li className="-ml-[13px] h-[25px] leading-[25px] font-bold">图层</li>
          <li className="flex h-[25px] items-center gap-[7px]">
            <span className="h-3 w-[5px] border border-l-0 border-[#9c7a1e] bg-[#f2dc6c]" />
            {PATH}
          </li>
          <li>
            <TreeCheck label="tot_c_cur.tif" defaultSelected />
            <p className="h-6 pl-[59px] leading-6">值</p>
            <div className="flex gap-[7px] pl-[30px]">
              <span className="mt-[2px] h-[50px] w-4 bg-linear-to-b from-[#3d9a2e] via-[#f8f7b4] to-[#bf1e12]" />
              <div className="flex h-[70px] flex-col justify-between leading-5">
                <span>高 : 22.9635</span>
                <span>低 : 0.468</span>
              </div>
            </div>
          </li>
          <li className="mt-[30px] flex h-[25px] items-center gap-2">
            <span className="h-[14px] w-1 rounded-r bg-[#5a7fae]" />
            {PATH}
          </li>
          <li>
            <TreeCheck label="北部湾县级行政区划" />
            <div className="pt-[7px] pl-[30px]">
              <div className="h-[14px] w-[19px] border border-[#777] bg-[#e2cdf8]" />
            </div>
          </li>
        </ul>
        <div className="mb-[3px] flex h-[19px] shrink-0 bg-[#efefef]">
          <span className="w-[89px] bg-[#cbcbcb]" />
          <ScrollArrow dir="right" className="mr-[5px] ml-auto" />
        </div>
      </div>
    </aside>
  );
}

function MapView() {
  return (
    <section className="flex min-w-0 flex-1 flex-col pr-px">
      <div className="flex min-h-0 flex-1 gap-[2px] border-t-2 border-[#777]">
        <div className="relative min-w-0 flex-1 overflow-hidden border-l-2 border-[#777] bg-[#fdfefd]">
          <RasterMap />
        </div>
        <div className="flex w-[18px] shrink-0 flex-col bg-[#efefef]">
          <ScrollArrow dir="up" className="h-5" />
          <span className="flex-1 bg-[#cbcbcb]" />
          <ScrollArrow dir="down" className="h-6" />
        </div>
      </div>
      <div className="flex h-[22px] shrink-0 items-center border-b border-[#ccc] pb-px">
        <button aria-label="Data view" className="flex h-4 w-5 items-center justify-center bg-[#c4def5]">
          <svg viewBox="0 0 12 12" className="size-3">
            <path d="M1 1H11V11H1Z" fill="#d6ecc8" stroke="#333" strokeWidth="1.500" />
            <path d="M3 9L9 3V6L5 9Z" fill="#5da046" />
          </svg>
        </button>
        <button aria-label="Layout view" className="flex w-[18px] justify-center">
          <svg viewBox="0 0 12 12" className="size-[10px]" fill="#fff" stroke="#333" strokeWidth="1.300">
            <path d="M2 1H8L11 4V11H2ZM4 5H8V8H4Z" />
          </svg>
        </button>
        <Sep />
        <button aria-label="Refresh" className="flex w-[20px] justify-center">
          <svg viewBox="0 0 12 12" className="size-[10px]" fill="none" stroke="#1f4a96" strokeWidth="1.800">
            <path d="M1 6A5 5 0 0 1 10 3M10 0V4H6M11 6A5 5 0 0 1 2 9M2 12V8H6" />
          </svg>
        </button>
        <button aria-label="Pause drawing" className="flex w-[18px] justify-center">
          <svg viewBox="0 0 8 8" className="size-2" fill="#1f4a96">
            <path d="M1 0H3V8H1ZM5 0H7V8H5Z" />
          </svg>
        </button>
        <ScrollArrow dir="left" className="ml-2 w-[22px]" />
        <span className="h-[17px] flex-1 bg-[#cbcbcb]" />
        <ScrollArrow dir="right" className="mr-[18px] w-6" />
      </div>
    </section>
  );
}

function Properties() {
  return (
    <aside className="flex w-[265px] shrink-0 flex-col bg-[#eee]">
      <h2 className="h-[27px] shrink-0 bg-linear-to-r from-[#bfcddd] to-[#d0e0ee] pl-[5px] leading-[27px]">属性</h2>
      <div className="flex h-[33px] shrink-0 items-center bg-linear-to-b from-[#fafafa] to-[#eee] pl-[5px] text-[#aaa]">
        <Tools items="category sortAz | searchProps | listGray -" />
      </div>
      <div className="h-[166px] border border-r-0 border-[#888]" />
      <div className="mt-2 ml-[111px] h-px w-[112px] bg-[#aaa]" />
    </aside>
  );
}

const FORMAT = "flex w-[28px] justify-center font-['Liberation_Serif',serif] text-[18px] font-bold";

function DrawBar() {
  return (
    <div className="flex h-[37px] shrink-0 items-center pl-[226px]">
      <Toolbar>
        <Grip />
        <span className="w-[6px]" />
        <TextMenu>绘制(D)</TextMenu>
        <span className="w-[2px]" />
        <Tools items="pointer rotateEl zoomEl | rectEl v" />
        <span className="w-[2px]" />
        <button aria-label="Text" className={FORMAT}>
          <span className="text-[22px] leading-6">A</span>
        </button>
        <Tools items="v editVert |" />
        <Combo label="Font" value="宋体" className="w-[214px] bg-white pl-1">
          <svg viewBox="0 0 16 18" className="h-[18px] w-4 shrink-0" aria-hidden="true">
            <path d="M1 1H12L15 4V17H1Z" fill="#cfe2f8" stroke="#7a98c0" />
            <ellipse cx="8" cy="9" rx="3" ry="5" transform="rotate(20 8 9)" fill="none" stroke="#1d6a4a" strokeWidth="2.500" />
          </svg>
        </Combo>
        <Combo
          label="Font size"
          value="10"
          className="-ml-px w-[57px] bg-white font-['Liberation_Sans',sans-serif] text-[14px]"
        />
        <button className={FORMAT}>B</button>
        <button className={`${FORMAT} italic`}>I</button>
        <button className={`${FORMAT} underline`}>U</button>
        <Sep />
        <button aria-label="Font color" className={FORMAT}>
          <span className="border-b-4 border-black px-1 leading-[18px]">A</span>
        </button>
        <div className="flex items-center gap-2 px-1">
          <Caret />
          <Icon name="fill" />
          <Caret />
          <Icon name="pen" />
          <Caret />
          <Icon name="dot" />
          <Caret />
        </div>
        <Overflow />
      </Toolbar>
    </div>
  );
}

export default function App() {
  return (
    <div className="relative flex h-screen min-h-[640px] flex-col overflow-hidden bg-linear-to-r from-[#ececec] to-[#fafafa] font-['Open_Sans','Noto_Sans_CJK_SC',sans-serif] text-[15px] leading-5 text-[#1c1c1c]">
      <TopBars />
      <main className="flex min-h-0 flex-1 gap-2">
        <Contents />
        <MapView />
        <Properties />
      </main>
      <DrawBar />
      <footer className="flex h-[25px] shrink-0 items-center justify-end gap-[10px] border-t border-[#ddd] bg-[#eee] pr-[53px]">
        <span>273791.295</span>
        <span>2592365.093 米</span>
      </footer>
      <StatsDialog />
      <div className="absolute top-[771px] right-[207px] flex size-[47px] items-center justify-center rounded-full border-2 border-white bg-linear-to-tr from-[#5cc0f8] to-[#3f86ee] text-[14px] text-white shadow-md">
        01:11
      </div>
    </div>
  );
}
